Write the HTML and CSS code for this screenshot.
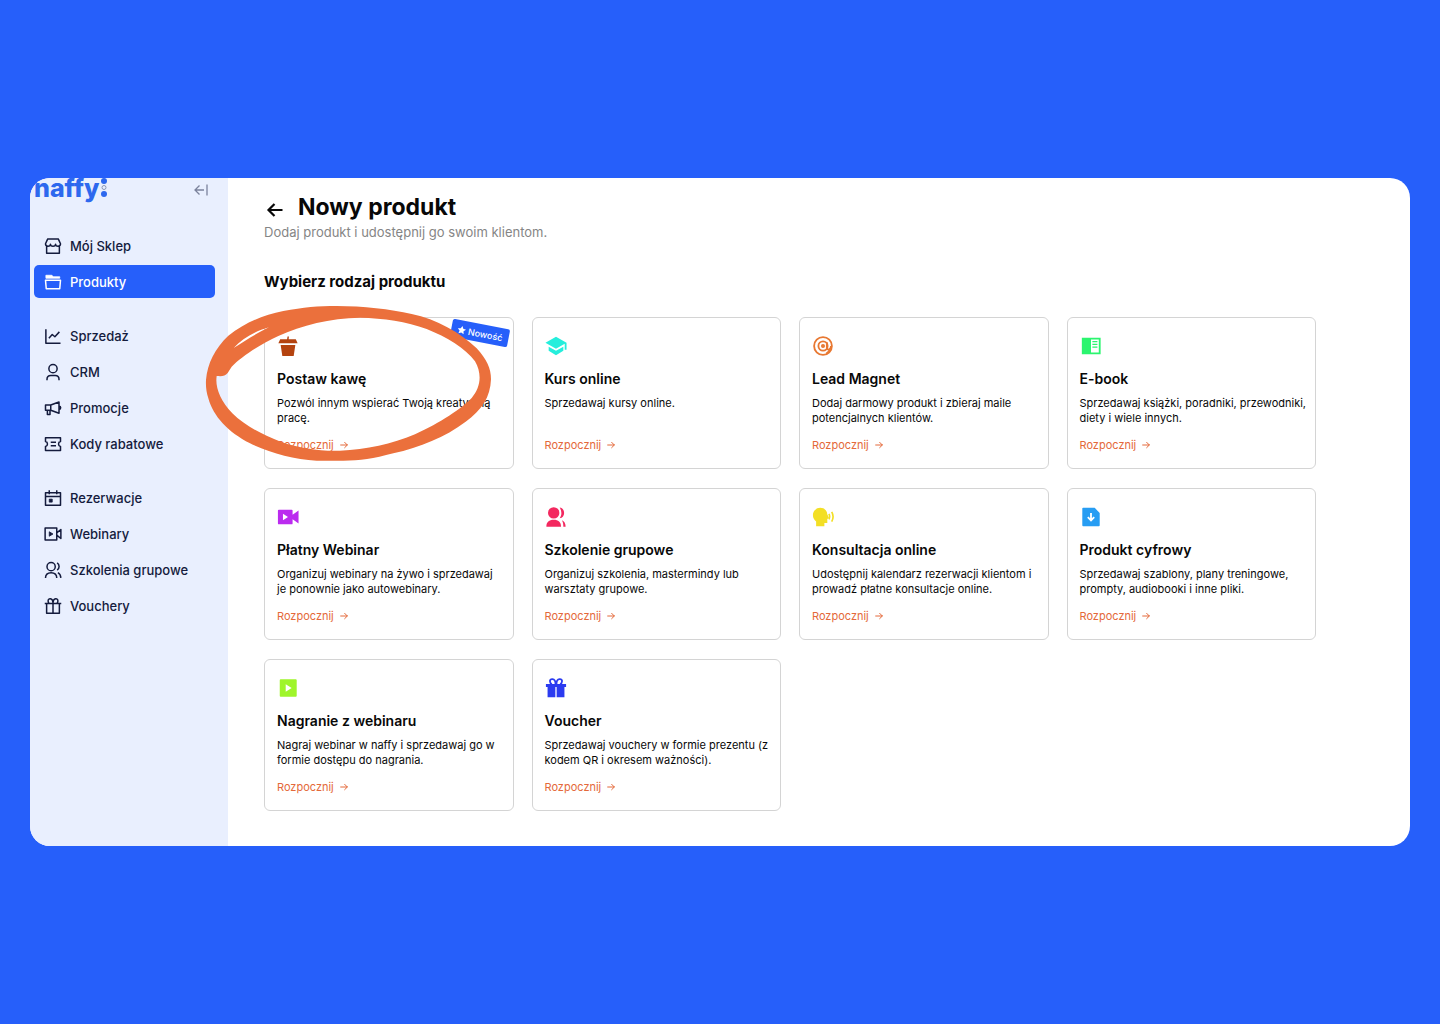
FILE: index.html
```html
<!DOCTYPE html>
<html lang="pl">
<head>
<meta charset="utf-8">
<meta name="viewport" content="width=device-width, initial-scale=1">
<title>Nowy produkt – naffy</title>
<link rel="stylesheet" href="styles.css">
</head>
<body>
<svg class="defs" aria-hidden="true">
  <symbol id="arrow" viewBox="0 0 12 12"><path d="M1 6h10M7 2 11 6 7 10" fill="none" stroke="currentColor" stroke-width="1.500" stroke-linecap="round" stroke-linejoin="round"/></symbol>
</svg>
<div class="app">
  <aside class="sidebar">
    <div class="brand">
      <a class="logo" href="#" aria-label="naffy"><span>naffy</span>
        <svg class="logo-dots" viewBox="0 0 6 20" aria-hidden="true"><circle cx="3" cy="3" r="3" fill="currentColor"/><circle cx="3" cy="9.500" r="2" fill="none" stroke="#8b98b5" stroke-width="1"/><circle cx="3" cy="16" r="3" fill="currentColor"/></svg>
      </a>
      <button class="collapse" type="button" aria-label="Zwiń menu"><svg viewBox="0 0 14 14"><path d="M10 7H1M5.500 2.500 1 7l4.500 4.500M13 1.500v11"/></svg></button>
    </div>
    <nav class="nav">
      <ul class="nav-group">
        <li><a class="nav-item" href="#"><svg viewBox="0 0 24 24"><path d="M5 2.500h14l3 6.500c0 2-1.500 3.200-3.300 3.200S15.400 11 15.400 9.500c0 1.600-1.500 2.700-3.400 2.700S8.600 11.100 8.600 9.500c0 1.500-1.500 2.700-3.300 2.700S2 11 2 9zM3.500 12v9.500h17V12" fill="none"/></svg>Mój Sklep</a></li>
        <li><a class="nav-item active" href="#" aria-current="page"><svg viewBox="0 0 24 24"><path d="M2 9.500h20l-1 11.500H3z"/><path d="M2.500 6V3h8l2 2H21v2H2.500z" fill="currentColor" stroke-width="1"/></svg>Produkty</a></li>
      </ul>
      <ul class="nav-group">
        <li><a class="nav-item" href="#"><svg viewBox="0 0 24 24"><path d="M2.500 3v18.500H22M6.500 15l4.500-5 3.500 3L20.500 6.500"/></svg>Sprzedaż</a></li>
        <li><a class="nav-item" href="#"><svg viewBox="0 0 24 24"><circle cx="12" cy="7.500" r="5.500"/><path d="M4 23v-1.500c0-3 2.200-5 5-5h6c2.800 0 5 2 5 5V23"/></svg>CRM</a></li>
        <li><a class="nav-item" href="#"><svg viewBox="0 0 24 24"><path d="M2 8h7l11-4v15L9 15H2zM9 8v7M4.500 15v5.500H8V15M20 9.500c3 0 3 4.500 0 4.500"/></svg>Promocje</a></li>
        <li><a class="nav-item" href="#"><svg viewBox="0 0 24 24"><path d="M2 3.500h20v5.200c-3.500.8-3.500 5.800 0 6.600v5.200H2v-5.200c3.500-.8 3.500-5.800 0-6.600zM9 9.800h7M9 14.200h7"/></svg>Kody rabatowe</a></li>
      </ul>
      <ul class="nav-group">
        <li><a class="nav-item" href="#"><svg viewBox="0 0 24 24"><path d="M2 5h20v16.500H2zM2 10h20M7 1.500V7M17 1.500V7"/><path d="M7 13.500h4v4H7z" fill="currentColor" stroke-width="1"/></svg>Rezerwacje</a></li>
        <li><a class="nav-item" href="#"><svg viewBox="0 0 24 24"><path d="M1.500 4h15.500v16H1.500zM17 10.500 22.500 6v12L17 13.500"/><path d="M7 9v6l5-3z" fill="currentColor" stroke-width="1"/></svg>Webinary</a></li>
        <li><a class="nav-item" href="#"><svg viewBox="0 0 24 24"><circle cx="9.500" cy="7.500" r="5.500"/><path d="M2 22.500c0-4.200 3-7 7.500-7s7.500 2.800 7.500 7M17.500 2.500c3.500 2 3.500 7.500 0 9.500M18.500 15.500c2.600 1.300 3.800 3.700 4 7"/></svg>Szkolenia grupowe</a></li>
        <li><a class="nav-item" href="#"><svg viewBox="0 0 24 24"><path d="M1 8.500h22M3.500 8.500V21.500h17V8.500M12 6v15.500M12 7.500C12 1 5 1 5.500 5.500c0 1.200.5 2.200 1.500 3M12 7.500c0-6.500 7-6.500 6.500-2 0 1.200-.5 2.200-1.500 3"/></svg>Vouchery</a></li>
      </ul>
    </nav>
  </aside>

  <main class="main">
    <header class="page-head">
      <div class="title-row">
        <a class="back" href="#" aria-label="Wstecz"><svg viewBox="0 0 20 20"><path d="M17.500 10H3.500M9.500 4 3.500 10l6 6"/></svg></a>
        <h1>Nowy produkt</h1>
      </div>
      <p>Dodaj produkt i udostępnij go swoim klientom.</p>
    </header>
    <h2>Wybierz rodzaj produktu</h2>

    <div class="grid">
      <article class="card">
        <svg class="icon coffee" viewBox="0 0 24 24"><path d="M1.500 9 3.500 4.500h7.500l.5-3h1.500l-.3 3H20.500l2 4.500zM4 10.800h16L18.200 23H5.800z"/></svg>
        <h3>Postaw kawę</h3>
        <p>Pozwól innym wspierać Twoją kreatywną pracę.</p>
        <a class="start" href="#">Rozpocznij <svg><use href="#arrow"/></svg></a>
        <span class="badge"><svg viewBox="0 0 12 12"><path d="m6 .5 1.700 3.600 3.900.5-2.900 2.700.8 4L6 9.300l-3.500 2 .8-4L.4 4.600l3.900-.5z"/></svg>Nowość</span>
        <svg class="ring" viewBox="0 0 900 525" aria-hidden="true"><path fill-rule="evenodd" d="M18 240C22 190 45 145 85 107C135 68 190 45 250 33C310 22 355 18 410 18C490 18 570 27 635 42C710 58 780 97 830 145C860 178 873 205 873 238C871 292 846 330 797 365C735 412 660 441 580 460C520 476 480 482 430 482H350C280 478 210 459 150 430C85 397 40 350 25 295C19 275 17 260 18 240ZM50 228C45 262 60 300 97 340C132 375 182 402 242 425C302 445 360 454 420 452C500 449 575 432 645 403C722 368 785 325 815 294C842 262 847 222 825 184C797 145 740 111 680 87C620 65 550 54 480 53C390 54 305 76 235 108C180 133 125 170 95 200L83 219C75 229 66 229 50 228ZM101 144C125 117 162 94 207 82C166 102 136 121 101 144Z"/></svg>
      </article>
      <article class="card">
        <svg class="icon course" viewBox="0 0 24 24"><path d="M12 2 .5 8.500 12 15l9.500-5.400V16h2V8.500zM4 12.700v4.500L12 22l8-4.800v-4.500L12 17.200z"/></svg>
        <h3>Kurs online</h3>
        <p>Sprzedawaj kursy online.</p>
        <a class="start" href="#">Rozpocznij <svg><use href="#arrow"/></svg></a>
      </article>
      <article class="card">
        <svg class="icon lead" viewBox="0 0 24 24"><g fill="none" stroke="currentColor" stroke-width="2"><circle cx="12" cy="12" r="9.700"/><path d="M16.200 8v6c0 3 4.500 2.500 4.500-2M20 16.500 15.500 20.500" /><circle cx="12" cy="12" r="5"/><circle cx="12" cy="12" r="1.200"/></g></svg>
        <h3>Lead Magnet</h3>
        <p>Dodaj darmowy produkt i zbieraj maile potencjalnych klientów.</p>
        <a class="start" href="#">Rozpocznij <svg><use href="#arrow"/></svg></a>
      </article>
      <article class="card">
        <svg class="icon ebook" viewBox="0 0 24 24"><path fill-rule="evenodd" d="M2 3h20.500v18H2zM12 5v14h8.500V5zM13.500 6.500H19V8h-5.500zM13.500 9.500H19V11h-5.500zM13.500 12.500H19V14h-5.500z"/></svg>
        <h3>E-book</h3>
        <p>Sprzedawaj książki, poradniki, przewodniki, diety i wiele innych.</p>
        <a class="start" href="#">Rozpocznij <svg><use href="#arrow"/></svg></a>
      </article>
      <article class="card">
        <svg class="icon webinar" viewBox="0 0 24 24"><path fill-rule="evenodd" d="M2 4h14q1 0 1 1v4.500L23.500 5v14L17 14.500V19q0 1-1 1H2q-1 0-1-1V5q0-1 1-1zM6.500 8.500v7L12 12z"/></svg>
        <h3>Płatny Webinar</h3>
        <p>Organizuj webinary na żywo i sprzedawaj je&nbsp;ponownie jako autowebinary.</p>
        <a class="start" href="#">Rozpocznij <svg><use href="#arrow"/></svg></a>
      </article>
      <article class="card">
        <svg class="icon group" viewBox="0 0 24 24"><circle cx="9.500" cy="7.500" r="6.200"/><path d="M1.500 22.500c0-5 3-7.500 8-7.500s8 2.500 8 7.500zM16 1.700c6.500.8 6.500 11 0 11.600 2.500-3.500 2.500-8 0-11.600zM18.500 15.500c2.500 1 4 3.500 4 7h-2.500c0-3-.4-5-1.500-7z"/></svg>
        <h3>Szkolenie grupowe</h3>
        <p>Organizuj szkolenia, mastermindy lub warsztaty grupowe.</p>
        <a class="start" href="#">Rozpocznij <svg><use href="#arrow"/></svg></a>
      </article>
      <article class="card">
        <svg class="icon consult" viewBox="0 0 24 24"><path d="M9 2c4.500 0 7.500 3 7.700 7l1.800 4-1.800 1.200v4.300H13.500V22H4.500v-5C2.500 15.200 1 13 1 10c0-4.500 3.500-8 8-8z"/><path d="M18.500 8.500c1 2 1 4 0 6M21.500 6.500c2 3.500 2 7 0 10.500" fill="none" stroke="currentColor" stroke-width="1.800"/></svg>
        <h3>Konsultacja online</h3>
        <p>Udostępnij kalendarz rezerwacji klientom i prowadź płatne konsultacje online.</p>
        <a class="start" href="#">Rozpocznij <svg><use href="#arrow"/></svg></a>
      </article>
      <article class="card">
        <svg class="icon digital" viewBox="0 0 24 24"><path d="M3.500 2H16l5.500 5.500V21q0 1-1 1h-17q-1 0-1-1V3q0-1 1-1z"/><path d="M12 7.500v8M8.500 12.200l3.500 3.500 3.500-3.500" fill="none" stroke="#fff" stroke-width="2"/></svg>
        <h3>Produkt cyfrowy</h3>
        <p>Sprzedawaj szablony, plany treningowe, prompty, audiobooki i inne pliki.</p>
        <a class="start" href="#">Rozpocznij <svg><use href="#arrow"/></svg></a>
      </article>
      <article class="card">
        <svg class="icon record" viewBox="0 0 24 24"><path fill-rule="evenodd" d="M4 2.500h16.500q1 0 1 1v17q0 1-1 1H4q-1 0-1-1v-17q0-1 1-1zM9.500 8v8l6.500-4z"/></svg>
        <h3>Nagranie z webinaru</h3>
        <p>Nagraj webinar w naffy i sprzedawaj go w formie dostępu do nagrania.</p>
        <a class="start" href="#">Rozpocznij <svg><use href="#arrow"/></svg></a>
      </article>
      <article class="card">
        <svg class="icon voucher" viewBox="0 0 24 24"><path d="M1 7.500h22v3.500H1zM2.800 10h8.500v12H2.800zM12.700 10h8.500v12h-8.500z"/><path d="M11.500 7.500C11.500.5 4.500 1.500 5.500 5c.2 1.500.8 2.500 2 3M12.500 7.500c0-7 7-6 6-2.500-.2 1.500-.8 2.500-2 3" fill="none" stroke="currentColor" stroke-width="2"/></svg>
        <h3>Voucher</h3>
        <p>Sprzedawaj vouchery w formie prezentu (z kodem QR i okresem ważności).</p>
        <a class="start" href="#">Rozpocznij <svg><use href="#arrow"/></svg></a>
      </article>
    </div>
  </main>
</div>
</body>
</html>
```
FILE: styles.css
```css
* { box-sizing: border-box; }

body {
  margin: 0;
  min-height: 100vh;
  padding: 30px;
  display: flex;
  align-items: center;
  background: #265ffa;
  color: #080808;
  font-family: Inter, "Open Sans", sans-serif;
}

h1, h2, h3, p, ul { margin: 0; padding: 0; }
li { list-style: none; }
a { color: inherit; text-decoration: none; }
svg { display: block; flex: none; }
.defs { position: absolute; width: 0; height: 0; }

.app {
  flex: 1;
  min-width: 0;
  display: flex;
  overflow: hidden;
  border-radius: 20px;
  background: #fff;
}

.sidebar {
  flex: none;
  width: 198px;
  padding: 0 13px 0 4px;
  background: #e9effe;
  color: #141b3d;
}

.brand {
  display: flex;
  align-items: center;
  justify-content: space-between;
  height: 24px;
  margin-bottom: 27px;
  padding-right: 6px;
}
.logo {
  display: flex;
  align-items: center;
  align-self: flex-start;
  gap: 2px;
  color: #2d68ee;
  font-size: 25px;
  font-weight: 800;
  line-height: 20px;
}
.logo-dots { width: 6px; height: 20px; }
.collapse {
  padding: 0;
  border: 0;
  background: none;
  color: #7b829c;
}
.collapse svg {
  width: 16px;
  height: 14px;
  fill: none;
  stroke: currentColor;
  stroke-width: 1.3;
}

.nav { display: grid; gap: 21px; }
.nav-group { display: grid; gap: 3px; }
.nav-item {
  display: flex;
  align-items: center;
  gap: 8px;
  height: 33px;
  padding-left: 10px;
  border-radius: 5px;
  font-size: 13px;
  font-weight: 500;
}
.nav-item svg {
  width: 18px;
  height: 18px;
  fill: none;
  stroke: currentColor;
  stroke-width: 2;
  stroke-linejoin: round;
}
.nav-item.active { background: #265ffa; color: #fff; }

.main {
  flex: 1;
  min-width: 0;
  padding: 13px 94px 35px 36px;
}
.title-row { display: flex; align-items: center; gap: 12px; }
.back { padding-top: 5px; }
.back svg {
  width: 22px;
  height: 20px;
  fill: none;
  stroke: currentColor;
  stroke-width: 2.2;
}
h1 { font-size: 23px; font-weight: 700; line-height: 32px; }
.page-head p { color: #858585; font-size: 13px; line-height: 18px; }
h2 {
  margin: 29px 0 23px;
  font-size: 15px;
  font-weight: 700;
  line-height: 24px;
}

.grid {
  display: grid;
  grid-template-columns: repeat(4, 1fr);
  gap: 19px 18px;
}
.card {
  position: relative;
  display: flex;
  flex-direction: column;
  align-items: flex-start;
  padding: 17px 4px 15px 12px;
  border: 1px solid #d4d4d4;
  border-radius: 6px;
}
.icon { width: 22px; height: 22px; margin-bottom: 12px; fill: currentColor; }
.card h3 {
  margin-bottom: 7px;
  font-size: 14px;
  font-weight: 600;
  line-height: 20px;
}
.card p {
  min-height: 30px;
  margin-bottom: 11px;
  font-size: 11px;
  line-height: 15px;
}
.start {
  display: flex;
  align-items: center;
  gap: 6px;
  margin-top: auto;
  color: #e4693a;
  font-size: 11px;
  line-height: 16px;
}
.start svg { width: 8px; height: 8px; }

.coffee { color: #b4430f; }
.course { color: #25eedc; }
.lead { color: #e87832; }
.ebook { color: #2bf56f; }
.webinar { color: #bb2bef; }
.group { color: #f3285f; }
.consult { color: #f3df25; }
.digital { color: #279df3; }
.record { color: #9ff52b; }
.voucher { color: #2b3bf0; }

.badge {
  position: absolute;
  top: 6px;
  right: 4px;
  display: flex;
  align-items: center;
  justify-content: center;
  gap: 2px;
  width: 58px;
  height: 18px;
  border-radius: 2px;
  background: #265ffa;
  color: #fff;
  font-size: 9px;
  font-weight: 500;
  transform: rotate(11deg);
}
.badge svg { width: 9px; height: 9px; fill: currentColor; }

.ring {
  position: absolute;
  top: -18px;
  left: -65px;
  width: 300px;
  height: 175px;
  fill: #eb703c;
  pointer-events: none;
}

@media (max-width: 1200px) {
  .main { padding-right: 36px; }
  .grid { grid-template-columns: repeat(2, 1fr); }
}
@media (max-width: 700px) {
  .app { flex-direction: column; }
  .sidebar { width: auto; padding-bottom: 20px; }
  .grid { grid-template-columns: 1fr; }
}
```
